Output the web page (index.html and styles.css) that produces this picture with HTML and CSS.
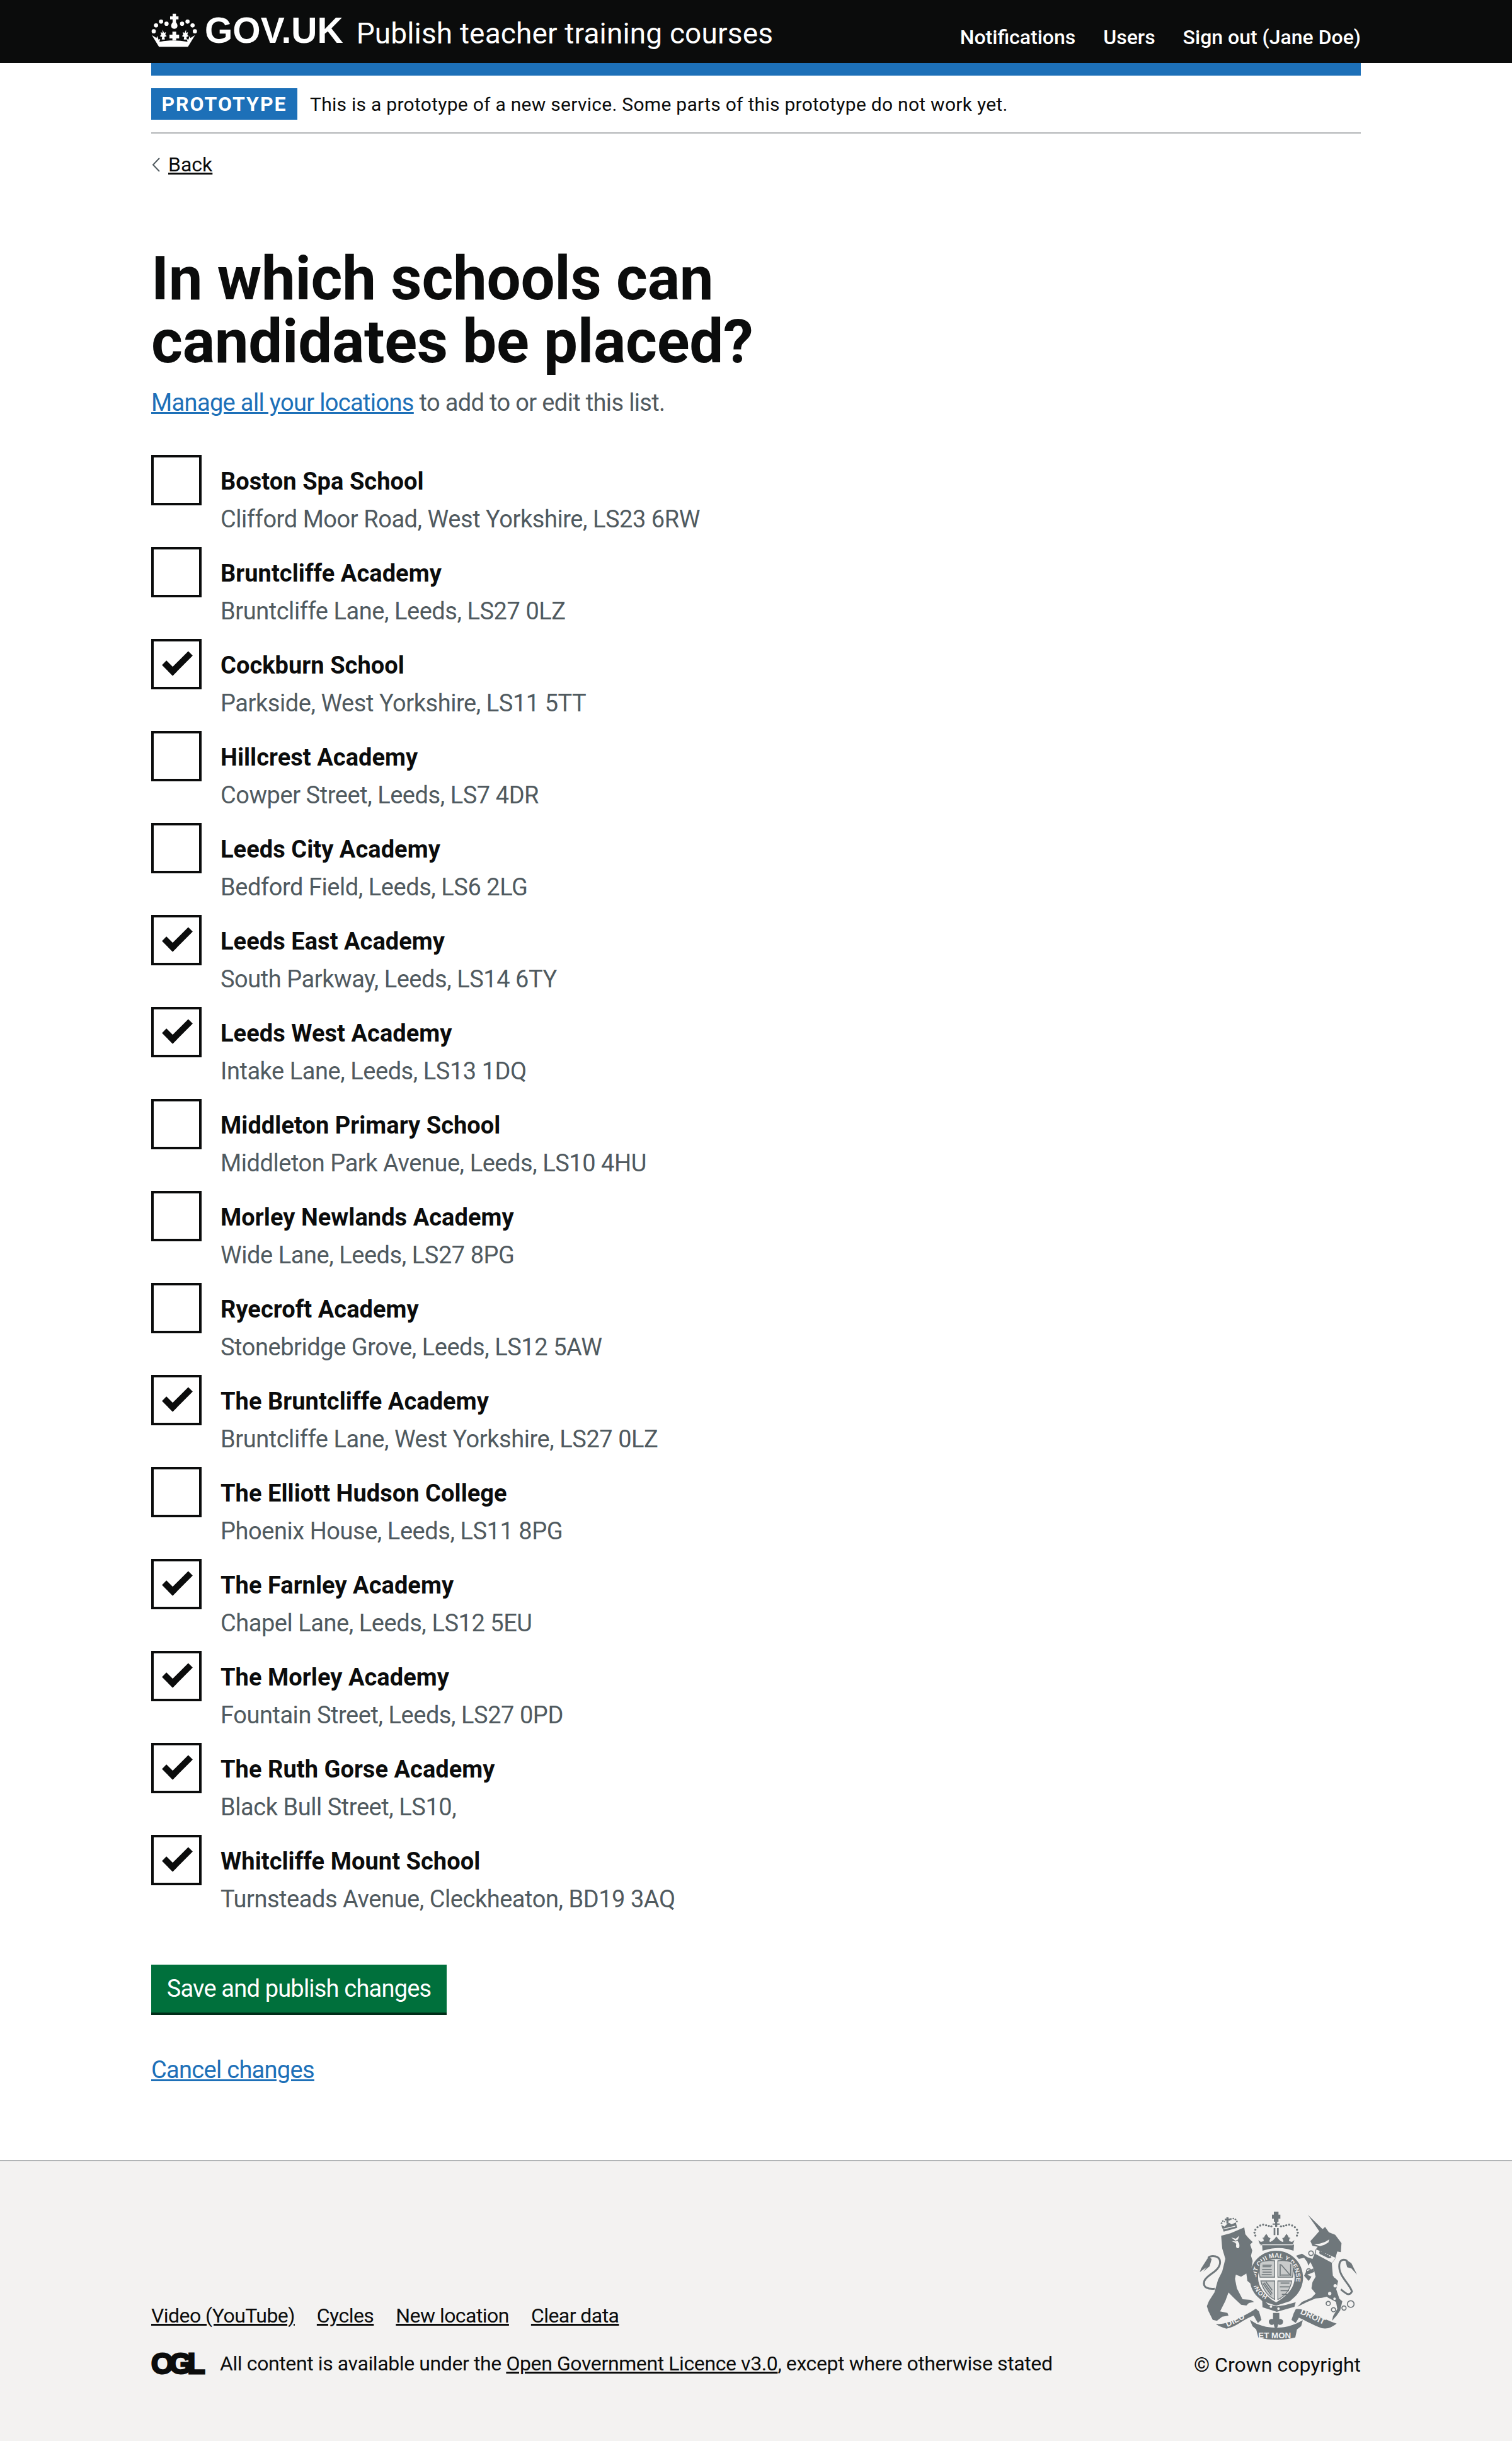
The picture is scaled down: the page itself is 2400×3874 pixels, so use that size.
FILE: index.html
```html
<!DOCTYPE html>
<html lang="en">
<head>
    <meta charset="UTF-8">
    <title>In which schools can candidates be placed?</title>
    <link rel="stylesheet" href="styles.css">
</head>
<body>
    <header class="top">
        <div class="wrap top-inner">
            <a class="logo" href="#">
                <svg class="crown" viewBox="15 15 225 165" fill="#fff">
                    <!-- cross and orb -->
                    <path d="M117 20h16v13h12v14h-12v14c6 8 9 16 6 23-3 6-8 8-14 8s-11-2-14-8c-3-7 0-15 6-23V47h-12V33h12z"/>
                    <!-- beads -->
                    <circle cx="27" cy="104" r="10"/><circle cx="38" cy="76" r="10"/><circle cx="62" cy="58" r="10"/><circle cx="88" cy="68" r="10"/>
                    <circle cx="162" cy="68" r="10"/><circle cx="188" cy="58" r="10"/><circle cx="212" cy="76" r="10"/><circle cx="223" cy="104" r="10"/>
                    <!-- fleurs and middle cross -->
                    <path d="M69 96l7 16 9-4-3 13 7 6-11 4 2 12H65l2-12-11-4 7-6-3-13 9 4z"/>
                    <path d="M181 96l-7 16-9-4 3 13-7 6 11 4-2 12h15l-2-12 11-4-7-6 3-13-9 4z"/>
                    <path d="M116 106h18v14h14v18h-14v10h-18v-10h-14v-18h14z"/>
                    <!-- band and wings -->
                    <path d="M18 122l22 14 4-10 6 18 8-4-4 14c46-8 88-8 134 0l-4-14 8 4 6-18 4 10 22-14-34 56H52z"/>
                </svg>
                <span class="logo-text">GOV.UK</span>
            </a>
            <a class="service" href="#">Publish teacher training courses</a>
            <nav class="top-nav">
                <a href="#">Notifications</a>
                <a href="#">Users</a>
                <a href="#">Sign out (Jane Doe)</a>
            </nav>
        </div>
    </header>

    <div class="wrap">
        <div class="blue-bar"></div>
        <div class="phase">
            <strong class="tag">PROTOTYPE</strong>
            <span>This is a prototype of a new service. Some parts of this prototype do not work yet.</span>
        </div>
        <a class="back" href="#">
            <svg class="chev" viewBox="0 0 15 23"><path d="M13 1L3 11.500 13 22" fill="none" stroke="#505a5f" stroke-width="2"/></svg>
            <span>Back</span>
        </a>

        <main>
            <h1>In which schools can candidates be placed?</h1>
            <p class="hint"><a href="#">Manage all your locations</a> to add to or edit this list.</p>

            <form>
                <label class="school">
                    <span class="box"></span>
                    <span class="school-text"><b>Boston Spa School</b><span>Clifford Moor Road, West Yorkshire, LS23 6RW</span></span>
                </label>
                <label class="school">
                    <span class="box"></span>
                    <span class="school-text"><b>Bruntcliffe Academy</b><span>Bruntcliffe Lane, Leeds, LS27 0LZ</span></span>
                </label>
                <label class="school checked">
                    <span class="box"></span>
                    <span class="school-text"><b>Cockburn School</b><span>Parkside, West Yorkshire, LS11 5TT</span></span>
                </label>
                <label class="school">
                    <span class="box"></span>
                    <span class="school-text"><b>Hillcrest Academy</b><span>Cowper Street, Leeds, LS7 4DR</span></span>
                </label>
                <label class="school">
                    <span class="box"></span>
                    <span class="school-text"><b>Leeds City Academy</b><span>Bedford Field, Leeds, LS6 2LG</span></span>
                </label>
                <label class="school checked">
                    <span class="box"></span>
                    <span class="school-text"><b>Leeds East Academy</b><span>South Parkway, Leeds, LS14 6TY</span></span>
                </label>
                <label class="school checked">
                    <span class="box"></span>
                    <span class="school-text"><b>Leeds West Academy</b><span>Intake Lane, Leeds, LS13 1DQ</span></span>
                </label>
                <label class="school">
                    <span class="box"></span>
                    <span class="school-text"><b>Middleton Primary School</b><span>Middleton Park Avenue, Leeds, LS10 4HU</span></span>
                </label>
                <label class="school">
                    <span class="box"></span>
                    <span class="school-text"><b>Morley Newlands Academy</b><span>Wide Lane, Leeds, LS27 8PG</span></span>
                </label>
                <label class="school">
                    <span class="box"></span>
                    <span class="school-text"><b>Ryecroft Academy</b><span>Stonebridge Grove, Leeds, LS12 5AW</span></span>
                </label>
                <label class="school checked">
                    <span class="box"></span>
                    <span class="school-text"><b>The Bruntcliffe Academy</b><span>Bruntcliffe Lane, West Yorkshire, LS27 0LZ</span></span>
                </label>
                <label class="school">
                    <span class="box"></span>
                    <span class="school-text"><b>The Elliott Hudson College</b><span>Phoenix House, Leeds, LS11 8PG</span></span>
                </label>
                <label class="school checked">
                    <span class="box"></span>
                    <span class="school-text"><b>The Farnley Academy</b><span>Chapel Lane, Leeds, LS12 5EU</span></span>
                </label>
                <label class="school checked">
                    <span class="box"></span>
                    <span class="school-text"><b>The Morley Academy</b><span>Fountain Street, Leeds, LS27 0PD</span></span>
                </label>
                <label class="school checked">
                    <span class="box"></span>
                    <span class="school-text"><b>The Ruth Gorse Academy</b><span>Black Bull Street, LS10,</span></span>
                </label>
                <label class="school checked">
                    <span class="box"></span>
                    <span class="school-text"><b>Whitcliffe Mount School</b><span>Turnsteads Avenue, Cleckheaton, BD19 3AQ</span></span>
                </label>

                <button type="button">Save and publish changes</button>
            </form>
            <p class="cancel"><a href="#">Cancel changes</a></p>
        </main>
    </div>

    <footer>
        <div class="wrap foot-inner">
            <div class="foot-left">
                <ul class="foot-links">
                    <li><a href="#">Video (YouTube)</a></li>
                    <li><a href="#">Cycles</a></li>
                    <li><a href="#">New location</a></li>
                    <li><a href="#">Clear data</a></li>
                </ul>
                <div class="licence">
                    <span class="ogl">OGL</span>
                    <span>All content is available under the <a href="#">Open Government Licence v3.0</a>, except where otherwise stated</span>
                </div>
            </div>
            <div class="foot-right">
                <svg class="crest" viewBox="105 75 795 645" fill="#6f777b">
                    <defs>
                        <path id="ring-arc" d="M457 490A95 95 0 1 1 537 490"/>
                    </defs>
                    <!-- royal crown -->
                    <path d="M486 90h22v14h9v20h-9v14h-6v24h-10v-24h-6v-14h-9v-20h9z"/>
                    <path d="M480 146h34v6h-34zM485 168h8v34h-8zM501 168h8v34h-8z"/>
                    <circle cx="398" cy="204" r="5"/><circle cx="394" cy="190" r="5"/><circle cx="398" cy="176" r="5"/><circle cx="408" cy="164" r="5"/><circle cx="421" cy="156" r="5"/><circle cx="435" cy="152" r="5"/><circle cx="449" cy="155" r="5"/><circle cx="462" cy="158" r="5"/><circle cx="474" cy="160" r="5"/>
                    <circle cx="596" cy="204" r="5"/><circle cx="600" cy="190" r="5"/><circle cx="596" cy="176" r="5"/><circle cx="586" cy="164" r="5"/><circle cx="573" cy="156" r="5"/><circle cx="559" cy="152" r="5"/><circle cx="545" cy="155" r="5"/><circle cx="532" cy="158" r="5"/><circle cx="520" cy="160" r="5"/>
                    <path d="M412 226l12 8 14-4-2-12-6-2 10-4 2-6 8-10 8 12 4 6 8 2-4 10-2 6 6 2 10-6 9-8 9-12 9 12 9 8 10 6 6-2-2-6-4-10 8-2 4-6 8-12 8 10 2 6 10 4-6 2-2 12 14 4 12-8-8 20H420z"/>
                    <path d="M420 250h154l8-4-2 30-14-4c-44-12-76-12-120 0l-14 4-2-30z"/>
                    <!-- garter ring -->
                    <path fill-rule="evenodd" d="M497 276c70 0 128 56 128 128 0 34-14 66-38 90l-24 22-66 22-66-22-24-22c-24-24-36-56-36-90 0-72 56-128 126-128zm0 40c-48 0-86 40-86 88 0 50 38 90 86 118 48-28 88-68 88-118 0-48-40-88-88-88z"/>
                    <text class="ring-text"><textPath href="#ring-arc">HONI SOIT QUI MAL Y PENSE</textPath></text>
                    <!-- shield -->
                    <path class="quarter" d="M420 332q30-12 70-8v78h-70c-4-26-4-50 0-70zM505 324q40-4 70 8c4 20 4 44 0 70h-70zM424 420h66v88c-32-14-56-48-66-88zM505 420h66c-6 40-32 74-66 88z"/>
                    <path class="sh-lines" d="M432 345h44M432 352l40 0M430 366h46M432 378h44M428 390h48M516 340v56M566 340v56M520 392h42M520 342l42 48M434 432l40 56M440 428l38 52M448 424l30 40M518 430h42M514 448h48M518 466h40M524 484h28"/>
                    <!-- buckle strip -->
                    <path d="M430 505l30 28 40 8 40-6 50-14-6 22-84 24-68-22z"/>
                    <circle class="hole" cx="472" cy="542" r="6"/><circle class="hole" cx="508" cy="552" r="6"/>
                    <!-- fleur -->
                    <path d="M482 572h30v30l-6 2c8-6 22-4 24 8 1 14-14 22-24 14 0 10-6 20-10 24-4-4-10-14-10-24-10 8-25 0-24-14 2-12 16-14 24-8l-4-2z"/>

                    <!-- lion -->
                    <g transform="translate(105 75)">
                        <path d="M130 130L175 118 240 90 245 122 258 138 280 160 268 172 278 200 272 225 280 250 275 280 300 340 305 370 280 365 255 345 250 310 225 325 200 315 196 335 205 380 232 432 270 435 287 445 262 450 250 462 225 458 190 425 165 400 150 440 125 490 160 497 165 510 135 515 110 535 90 530 70 490 62 465 72 440 98 400 115 340 135 300 150 240 135 190z"/>
                        <path class="cut" d="M178 138l22 6 16-14-6 18-12 6zM180 155l20 2 8-4 8 14c2 12 2 24-8 22-8 0-8-12-6-20l-6-6z"/>
                        <path class="tail" d="M100 382C70 385 40 378 50 345 60 315 125 300 125 255 125 225 85 220 68 235"/>
                        <path d="M70 230L35 285 28 303 60 280 45 300 75 275 85 240z"/>
                        <!-- lion crown -->
                        <path d="M142 110L130 78 146 86 160 72 168 68 180 76 200 66 206 92z"/>
                        <path d="M155 42h10v6h8v9h-8v14h-10V57h-8v-9h8z"/>
                        <circle cx="132" cy="70" r="4"/><circle cx="138" cy="60" r="4"/><circle cx="146" cy="63" r="3"/><circle cx="176" cy="50" r="4"/><circle cx="188" cy="48" r="4"/><circle cx="198" cy="52" r="4"/><circle cx="205" cy="62" r="4"/>
                        <path class="cut" d="M140 96l58-14-1 4-56 14z"/>
                        <!-- ribbon -->
                        <path d="M105 550C150 555 230 520 295 477L310 490 322 530 305 545 285 510C240 525 200 565 155 572 130 565 118 560 105 550z"/>
                        <text class="rib-text" x="160" y="565" transform="rotate(-27 160 565)">DIEU</text>
                    </g>

                    <!-- unicorn -->
                    <g transform="translate(480 75)">
                        <path d="M190 178L180 155 207 125 222 108 168 30 238 98 250 88 268 113 298 125 328 165 325 208 308 205 298 240 282 262 287 320 312 345 303 385 318 430 332 442 322 485 305 510 283 535 288 512 308 478 302 445 265 425 258 420 235 425 205 428 165 445 118 468 140 445 185 425 205 405 185 380 190 350 205 325 195 285 180 255 170 272 165 255 150 235 125 240 112 225 140 215 165 232 190 240 200 215 205 195 215 182z"/>
                        <path d="M195 285L160 300 150 320 172 345 185 325 165 315 198 302z"/>
                        <path class="cut" d="M197 170l28-3 25-8 20-12-4 14-20 12-20 6z"/>
                        <path class="cut" d="M208 195l92 40-17 24-78-42z"/>
                        <path d="M222 208l4-8 6 6 8-4 2 8 8-2 0 8 8-1 2 7 8-2 2 8 8-2 2 8-12 4-44-22z"/>
                        <circle class="ring" cx="183" cy="213" r="11"/><circle class="ring" cx="172" cy="298" r="11"/>
                        <circle class="cut" cx="300" cy="322" r="9"/><circle class="cut" cx="298" cy="368" r="8"/><circle class="cut" cx="272" cy="405" r="8"/><circle class="cut" cx="295" cy="430" r="6"/>
                        <circle class="ring" cx="265" cy="452" r="10"/><circle class="ring" cx="290" cy="482" r="10"/><circle class="ring" cx="340" cy="474" r="10"/><circle class="ring" cx="372" cy="455" r="16"/>
                        <path class="tail" d="M325 385C350 405 365 420 378 395 365 355 310 320 318 265 322 240 345 240 355 250"/>
                        <path d="M345 241L375 260 402 315 375 285 355 280z"/>
                        <!-- ribbon -->
                        <path d="M110 480C150 470 220 520 305 548 280 565 265 575 235 570 190 555 150 530 125 520L110 545 90 530 100 500z"/>
                        <text class="rib-text" x="130" y="500" transform="rotate(25 130 500)">DROIT</text>
                    </g>

                    <!-- et mon -->
                    <path d="M372 605l30 18c60 26 130 26 190 0l32-16-8 28-20 16-8 38c-56 14-120 14-176 0l-10-38-18-16z"/>
                    <text class="rib-text" x="412" y="692">ET MON</text>
                </svg>
                <a class="copy" href="#">© Crown copyright</a>
            </div>
        </div>
    </footer>
</body>
</html>
```

FILE: styles.css
```css
* {
    box-sizing: border-box;
}

body {
    margin: 0;
    font-family: Roboto, Arial, sans-serif;
    color: #0b0c0c;
    background-color: white;
}

a {
    color: inherit;
}

.wrap {
    width: 1920px;
    margin: 0 auto;
}

/* header */
.top {
    height: 100px;
    background-color: #0b0c0c;
    color: white;
}

.top a {
    color: white;
    text-decoration: none;
}

.top-inner {
    display: flex;
    align-items: center;
    height: 100px;
}

.logo {
    display: flex;
    align-items: center;
    gap: 10px;
    margin-right: 21px;
}

.crown {
    width: 75px;
    height: 55px;
    margin-top: -5px;
}

.logo-text {
    font-family: "Liberation Sans", Arial, sans-serif;
    font-size: 57px;
    font-weight: bold;
    line-height: 100px;
    margin-top: -4px;
}

.service {
    font-size: 46px;
    letter-spacing: 0.15px;
    margin-top: 5px;
}

.top-nav {
    display: flex;
    gap: 44px;
    margin-left: auto;
    font-size: 32px;
    font-weight: 500;
    padding-top: 18px;
}

/* phase banner */
.blue-bar {
    height: 20px;
    background-color: #1d70b8;
}

.phase {
    display: flex;
    align-items: center;
    gap: 20px;
    height: 92px;
    border-bottom: 2px solid #b1b4b6;
    font-size: 30px;
    letter-spacing: 0.27px;
}

.tag {
    width: 232px;
    height: 50px;
    background-color: #1d70b8;
    color: white;
    font-size: 32px;
    letter-spacing: 2px;
    line-height: 50px;
    text-align: center;
}

.back {
    display: flex;
    align-items: center;
    gap: 12px;
    width: max-content;
    margin-top: 29px;
    font-size: 32px;
    line-height: 40px;
}

.chev {
    width: 15px;
    height: 23px;
}

/* main */
h1 {
    width: 1100px;
    margin: 111px 0 0;
    font-size: 96px;
    line-height: 100px;
    letter-spacing: -0.3px;
    font-weight: 700;
}

.hint {
    margin: 22px 0 0;
    font-size: 38px;
    line-height: 50px;
    letter-spacing: -0.65px;
    color: #505a5f;
}

.hint a,
.cancel a {
    color: #1d70b8;
}

form {
    margin-top: 58px;
}

.school {
    display: flex;
    gap: 30px;
    height: 146px;
}

.box {
    position: relative;
    flex: none;
    width: 80px;
    height: 80px;
    border: 4px solid #0b0c0c;
    background-color: white;
}

.checked .box::after {
    content: "";
    box-sizing: border-box;
    position: absolute;
    top: 18px;
    left: 15px;
    width: 45px;
    height: 24px;
    border: solid #0b0c0c;
    border-width: 0 0 10px 10px;
    transform: rotate(-45deg);
}

.school-text {
    display: flex;
    flex-direction: column;
    padding-top: 17px;
    font-size: 38px;
    line-height: 50px;
    letter-spacing: -0.45px;
    color: #505a5f;
}

.school-text b {
    color: #0b0c0c;
    letter-spacing: 0.05px;
    margin-bottom: 10px;
}

button {
    display: block;
    height: 80px;
    width: 469px;
    margin-top: 60px;
    padding: 0 0 4px;
    border: none;
    box-shadow: inset 0 -4px 0 #002d18;
    background-color: #00703c;
    color: white;
    font-family: inherit;
    font-size: 38px;
    letter-spacing: -0.8px;
}

.cancel {
    margin: 62px 0 0;
    font-size: 38px;
    line-height: 50px;
    letter-spacing: -0.7px;
}

/* footer */
footer {
    margin-top: 118px;
    height: 446px;
    border-top: 2px solid #b1b4b6;
    background-color: #f3f2f1;
}

.foot-inner {
    display: flex;
    justify-content: space-between;
    height: 100%;
}

.foot-left {
    padding-top: 220px;
    font-size: 32px;
}

.foot-links {
    display: flex;
    gap: 35px;
    margin: 0;
    padding: 0;
    list-style: none;
    line-height: 50px;
    letter-spacing: -0.55px;
}

.licence {
    display: flex;
    align-items: center;
    gap: 26px;
    margin-top: 26px;
    height: 50px;
    letter-spacing: -0.4px;
}

.ogl {
    width: 83px;
    font-family: "Liberation Sans", Arial, sans-serif;
    font-size: 46px;
    font-weight: bold;
    letter-spacing: -7px;
    -webkit-text-stroke: 3px #0b0c0c;
}

.foot-right {
    display: flex;
    flex-direction: column;
    align-items: flex-end;
    padding-top: 75px;
}

.crest {
    width: 265px;
    height: 215px;
}

.copy {
    margin-top: 8px;
    font-size: 32px;
    line-height: 50px;
    text-decoration: none;
}

/* crest details */
.ring-text {
    font-family: "Liberation Sans", Arial, sans-serif;
    font-weight: bold;
    font-size: 30px;
    fill: #f3f2f1;
}

.rib-text {
    font-family: "Liberation Sans", Arial, sans-serif;
    font-weight: bold;
    font-size: 40px;
    fill: #f3f2f1;
}

.quarter {
    fill: #c9cbcb;
    stroke: #6f777b;
    stroke-width: 4;
}

.sh-lines {
    fill: none;
    stroke: #6f777b;
    stroke-width: 5;
}

.cut {
    fill: #f3f2f1;
}

.hole {
    fill: #f3f2f1;
}

.tail {
    fill: none;
    stroke: #6f777b;
    stroke-width: 9;
}

.ring {
    fill: none;
    stroke: #6f777b;
    stroke-width: 5;
}
```
